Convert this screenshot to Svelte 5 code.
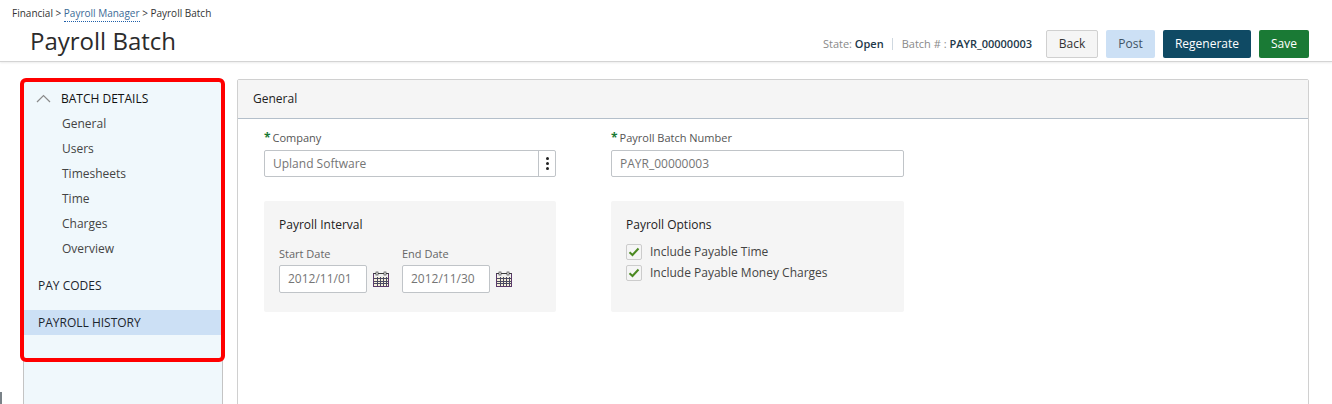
<script>
  const navItems = ['General', 'Users', 'Timesheets', 'Time', 'Charges', 'Overview'];
  const options = ['Include Payable Time', 'Include Payable Money Charges'];
  const dates = [
    { label: 'Start Date', value: '2012/11/01' },
    { label: 'End Date', value: '2012/11/30' }
  ];
  const calCols = [4, 7, 10, 13];
  const calRows = [8, 11, 13];
</script>

<div class="page">
  <header class="topbar">
    <div class="crumbs">Financial &gt; <span class="crumb-link">Payroll Manager</span> &gt; Payroll Batch</div>
    <div class="title-row">
      <h1>Payroll Batch</h1>
      <div class="actions">
        <span class="meta">State: <b>Open</b></span>
        <span class="sep"></span>
        <span class="meta">Batch # : <b>PAYR_00000003</b></span>
        <button class="btn back">Back</button>
        <button class="btn post">Post</button>
        <button class="btn regen">Regenerate</button>
        <button class="btn save">Save</button>
      </div>
    </div>
  </header>

  <div class="content">
    <aside class="sidebar">
      <div class="section-head">
        <svg class="chevron" width="15" height="9" viewBox="0 0 15 9"><path d="M1 8 L7.5 1.5 L14 8" fill="none" stroke="#8a8a8a" stroke-width="1.2"/></svg>
        <span>BATCH DETAILS</span>
      </div>
      <ul>
        {#each navItems as item}
          <li>{item}</li>
        {/each}
      </ul>
      <div class="nav-top">PAY CODES</div>
      <div class="nav-top active">PAYROLL HISTORY</div>
      <div class="highlight"></div>
    </aside>

    <main class="panel">
      <div class="panel-head">General</div>
      <div class="panel-body">
        <div class="col">
          <label class="field-label"><i>*</i>Company</label>
          <div class="input picker">
            <span>Upland Software</span>
            <span class="dots"><em></em><em></em><em></em></span>
          </div>
          <section class="box interval">
            <h2>Payroll Interval</h2>
            <div class="dates">
              {#each dates as d}
                <div class="date">
                  <div class="date-label">{d.label}</div>
                  <div class="date-row">
                    <div class="input date-input">{d.value}</div>
                    <svg class="cal" width="16" height="16" viewBox="0 0 16 16">
                      <rect x="0.5" y="2.5" width="15" height="13" fill="#f6efd9" stroke="#5a3a6a"/>
                      <rect x="1" y="3" width="14" height="3" fill="#f0f0f0"/>
                      <path d="M0.5 2.5H15.5" stroke="#3a3a3a"/>
                      <rect x="3" y="1" width="2" height="3" fill="#fff" stroke="#444" stroke-width=".7"/>
                      <rect x="11" y="1" width="2" height="3" fill="#fff" stroke="#444" stroke-width=".7"/>
                      {#each calCols as x}<path d="M{x + .5} 6V15" stroke="#4a4a62" stroke-width="1"/>{/each}
                      {#each calRows as y}<path d="M1 {y - .5}H15" stroke="#4a4a62" stroke-width="1"/>{/each}
                    </svg>
                  </div>
                </div>
              {/each}
            </div>
          </section>
        </div>

        <div class="col">
          <label class="field-label"><i>*</i>Payroll Batch Number</label>
          <div class="input">PAYR_00000003</div>
          <section class="box">
            <h2>Payroll Options</h2>
            {#each options as opt}
              <div class="check-row">
                <span class="check">
                  <svg width="12" height="10" viewBox="0 0 12 10"><path d="M1.5 5.2 L4.5 8 L10.5 1.5" fill="none" stroke="#4c8a22" stroke-width="2"/></svg>
                </span>
                {opt}
              </div>
            {/each}
          </section>
        </div>
      </div>
    </main>
  </div>
  <div class="tick"></div>
</div>

<style>
  :global(body) {
    margin: 0;
    background: #fff;
    overflow: hidden;
  }

  .page {
    position: relative;
    height: 404px;
    overflow: hidden;
    color: #333;
    font-family: 'Open Sans', sans-serif;
    font-size: 12px;
  }

  .topbar {
    box-sizing: border-box;
    height: 62px;
    padding: 5px 23px 0 12px;
    border-bottom: 1px solid #d4d4d4;
    box-shadow: 0 1px 2px rgba(0, 0, 0, 0.08);
  }

  .crumbs {
    height: 16px;
    font-size: 10px;
    line-height: 16px;
    color: #333;
  }

  .crumb-link {
    color: #3c6a96;
    border-bottom: 1px dotted #1f5fa8;
    padding-bottom: 1px;
  }

  .title-row {
    display: flex;
    align-items: center;
    justify-content: space-between;
    height: 40px;
    margin-top: -1px;
    padding-left: 18px;
  }

  h1 {
    margin: 0;
    font-size: 24px;
    font-weight: 400;
    color: #2b2b2b;
  }

  .actions {
    display: flex;
    align-items: center;
    margin-top: 7px;
  }

  .meta {
    font-size: 11px;
    color: #8a8a8a;
  }

  .meta b {
    font-weight: 600;
    color: #22384a;
  }

  .sep {
    width: 1px;
    height: 12px;
    margin: 0 9px 0 8px;
    background: #cfd8e0;
  }

  .btn {
    box-sizing: border-box;
    height: 28px;
    padding: 0;
    border: 1px solid transparent;
    border-radius: 2px;
    font-family: inherit;
    font-size: 12px;
    margin-left: 8px;
  }

  .back {
    width: 52px;
    margin-left: 14px;
    background: #f5f5f5;
    border-color: #d0d0d0;
    color: #333;
  }

  .post {
    width: 49px;
    background: #cce0f5;
    color: #3f5365;
  }

  .regen {
    width: 88px;
    background: #0f4a64;
    color: #fff;
  }

  .save {
    width: 50px;
    background: #1a7a35;
    color: #fff;
  }

  .content {
    display: flex;
    gap: 14px;
    padding: 17px 23px 0;
    height: 343px;
  }

  .sidebar {
    position: relative;
    flex: 0 0 200px;
    box-sizing: border-box;
    border: 1px solid #c4c4c4;
    background: #f0f8fc;
    padding-top: 6px;
  }

  .section-head {
    display: flex;
    align-items: center;
    height: 25px;
    padding-left: 12px;
    color: #111;
    font-weight: 500;
  }

  .chevron {
    margin-right: 10px;
  }

  ul {
    list-style: none;
    margin: 0;
    padding: 0;
  }

  li {
    height: 25px;
    padding-left: 38px;
    line-height: 25px;
    color: #444;
  }

  .nav-top {
    height: 25px;
    margin-top: 12px;
    padding-left: 14px;
    line-height: 25px;
    font-weight: 500;
    color: #1c252e;
  }

  .active {
    background: #cce0f5;
  }

  .highlight {
    position: absolute;
    top: -2px;
    left: -4px;
    width: 197px;
    height: 276px;
    border: 4px solid #f00;
    border-radius: 6px;
  }

  .panel {
    flex: 0 0 1072px;
    box-sizing: border-box;
    border: 1px solid #d0d0d0;
    border-radius: 2px 2px 0 0;
  }

  .panel-head {
    box-sizing: border-box;
    height: 39px;
    padding-left: 15px;
    line-height: 38px;
    background: #f5f5f5;
    border-bottom: 1px solid #b4bfca;
    font-weight: 500;
    color: #222;
  }

  .panel-body {
    display: flex;
    gap: 55px;
    padding: 11px 26px;
  }

  .col {
    width: 292px;
  }

  .col:last-child {
    width: 293px;
  }

  .field-label {
    display: block;
    height: 20px;
    font-size: 11px;
    line-height: 16px;
    color: #555;
  }

  .field-label i {
    margin-right: 2px;
    font-style: normal;
    font-weight: 700;
    font-size: 12px;
    color: #1a7a35;
  }

  .input {
    box-sizing: border-box;
    height: 27px;
    padding-left: 8px;
    border: 1px solid #c0c4c8;
    border-radius: 2px;
    line-height: 25px;
    color: #757575;
    background: #fff;
  }

  .picker {
    display: flex;
    justify-content: space-between;
  }

  .dots {
    display: flex;
    flex-direction: column;
    justify-content: center;
    align-items: center;
    gap: 2px;
    box-sizing: border-box;
    width: 17px;
    padding-left: 1px;
    border-left: 1px solid #c0c4c8;
  }

  .dots em {
    width: 3px;
    height: 3px;
    border-radius: 50%;
    background: #222;
  }

  .box {
    box-sizing: border-box;
    height: 111px;
    margin-top: 24px;
    padding: 15px;
    background: #f5f5f5;
    border-radius: 2px;
  }

  h2 {
    margin: 0 0 7px;
    font-size: 12px;
    line-height: 18px;
    font-weight: 500;
    color: #222;
  }

  .dates {
    display: flex;
    gap: 13px;
    margin-top: 12px;
  }

  .date-label {
    height: 19px;
    font-size: 11px;
    line-height: 16px;
    color: #666;
  }

  .date-row {
    display: flex;
    align-items: center;
    gap: 6px;
  }

  .date-input {
    width: 88px;
    height: 28px;
    line-height: 26px;
  }

  .cal {
    flex: none;
  }

  .check-row {
    display: flex;
    align-items: center;
    height: 21px;
    color: #444;
  }

  .check {
    display: flex;
    align-items: center;
    justify-content: center;
    box-sizing: border-box;
    width: 16px;
    height: 16px;
    margin-right: 8px;
    border: 1px solid #ccc;
    border-radius: 2px;
    background: #f5f5f5;
  }

  .tick {
    position: absolute;
    left: 0;
    top: 392px;
    width: 2px;
    height: 12px;
    background: #7a8288;
  }
</style>
